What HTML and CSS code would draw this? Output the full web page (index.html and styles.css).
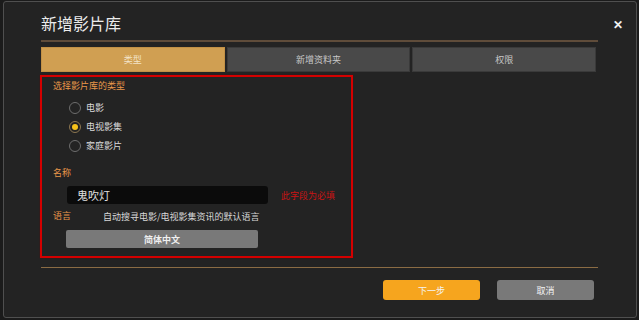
FILE: index.html
```html
<!DOCTYPE html>
<html lang="zh-CN">
<head>
<meta charset="UTF-8" />
<meta name="viewport" content="width=device-width, initial-scale=1" />
<title>新增影片库</title>
<link rel="stylesheet" href="styles.css">
</head>
<body>
<div class="dialog">
    <button class="close-btn" type="button">&#x2715;</button>
    <div class="dialog-header">
        <h1>新增影片库</h1>
    </div>
    <div class="divider top"></div>

    <div class="tabs">
        <button class="tab active" type="button">类型</button>
        <button class="tab" type="button">新增资料夹</button>
        <button class="tab" type="button">权限</button>
    </div>

    <div class="panel">
        <div class="field-label">选择影片库的类型</div>
        <div class="radio-group">
            <label class="radio"><input type="radio" name="libType" /><span class="dot"></span>电影</label>
            <label class="radio"><input type="radio" name="libType" checked /><span class="dot"></span>电视影集</label>
            <label class="radio"><input type="radio" name="libType" /><span class="dot"></span>家庭影片</label>
        </div>

        <div class="field-label name-label">名称</div>
        <div class="name-row">
            <input class="name-input" type="text" value="鬼吹灯" />
            <span class="required">此字段为必填</span>
        </div>

        <div class="lang-row">
            <span class="field-label">语言</span>
            <span class="lang-hint">自动搜寻电影/电视影集资讯的默认语言</span>
        </div>
        <button class="lang-btn" type="button">简体中文</button>
    </div>

    <div class="divider bottom"></div>

    <div class="dialog-footer">
        <button class="btn primary" type="button">下一步</button>
        <button class="btn secondary" type="button">取消</button>
    </div>
</div>
</body>
</html>
```

FILE: styles.css
```css
* {
    box-sizing: border-box;
}
body, html {
    margin: 0;
    height: 100%;
    background: #1b1b1b;
    font-family: "Noto Sans CJK SC", "Noto Sans", sans-serif;
}
button {
    font-family: inherit;
    cursor: pointer;
}
.dialog {
    position: relative;
    margin: 1px 3px 0 3px;
    width: 634px;
    height: 317px;
    background: #232323;
    border: 1px solid #4f4f4f;
    border-radius: 3px;
    padding: 0 38px 0 37px;
}
.close-btn {
    position: absolute;
    top: 14px;
    right: 13px;
    background: transparent;
    border: none;
    color: #f2f2f2;
    font-size: 12px;
    font-weight: bold;
    padding: 0;
    line-height: 16px;
}
.dialog-header {
    height: 38px;
    padding-top: 11px;
}
.dialog-header h1 {
    margin: 0;
    font-size: 16px;
    line-height: 20px;
    font-weight: normal;
    color: #ececec;
}
.divider {
    height: 2px;
}
.divider.top {
    background: #5f4c3a;
}
.divider.bottom {
    margin-top: 9px;
    height: 1px;
    background: #8b6c44;
}
.tabs {
    display: grid;
    grid-template-columns: 1fr 1fr 1fr;
    gap: 2px;
    margin: 5px 2px 0 0;
}
.tab {
    height: 25px;
    background: #494949;
    border: 1px solid #3a3a3a;
    color: #c8c8c8;
    font-size: 9px;
    padding: 0;
}
.tab.active {
    background: #d09f52;
    border-color: #c29146;
    color: #f3e3c8;
}
.panel {
    width: 313px;
    height: 183px;
    margin: 3px 0 0 -1px;
    border: 2px solid #d40000;
    box-shadow: 0 0 1px #600;
    padding: 3px 0 0 11px;
}
.field-label {
    color: #e9974a;
    font-size: 9px;
    line-height: 12px;
}
.radio-group {
    display: flex;
    flex-direction: column;
    margin: 6px 0 0 16px;
}
.radio {
    display: flex;
    align-items: center;
    height: 19px;
    color: #dadada;
    font-size: 9px;
}
.radio input {
    display: none;
}
.dot {
    width: 12px;
    height: 12px;
    border: 1px solid #6d6d6d;
    border-radius: 50%;
    margin-right: 5px;
    display: flex;
    align-items: center;
    justify-content: center;
}
.radio input:checked + .dot {
    border-color: #8c7650;
}
.radio input:checked + .dot::after {
    content: "";
    width: 6px;
    height: 6px;
    border-radius: 50%;
    background: #f6c21a;
}
.name-label {
    margin-top: 12px;
}
.name-row {
    display: flex;
    align-items: center;
    margin: 7px 0 0 14px;
}
.name-input {
    width: 201px;
    height: 18px;
    background: #0b0b0b;
    border: none;
    border-radius: 3px;
    color: #e0e0e0;
    font-family: inherit;
    font-size: 11px;
    padding: 0 10px;
}
.required {
    margin-left: 13px;
    color: #c81414;
    font-size: 9px;
}
.lang-row {
    display: flex;
    align-items: center;
    margin-top: 6px;
    height: 12px;
}
.lang-hint {
    margin-left: 32px;
    color: #d8d8d8;
    font-size: 9px;
}
.lang-btn {
    display: block;
    width: 192px;
    height: 18px;
    margin: 8px 0 0 13px;
    background: #797979;
    border: none;
    border-radius: 2px;
    color: #f0f0f0;
    font-size: 9px;
    font-weight: bold;
    padding: 0;
}
.dialog-footer {
    display: flex;
    justify-content: flex-end;
    gap: 17px;
    margin-top: 12px;
    padding-right: 4px;
}
.btn {
    width: 97px;
    height: 20px;
    border: none;
    border-radius: 3px;
    color: #f4f4f4;
    font-size: 9px;
    padding: 0;
}
.btn.primary {
    background: #f6a51e;
}
.btn.secondary {
    background: #797979;
}
```
